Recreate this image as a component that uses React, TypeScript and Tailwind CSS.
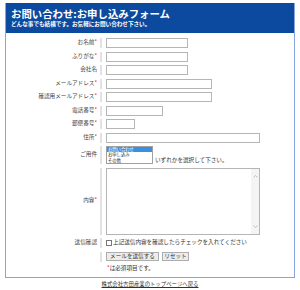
import React from "react";

const font = { fontFamily: '"Noto Sans CJK JP", "Noto Sans", sans-serif' };

type Row = { label: string; required?: boolean; width: number };

const rows: Row[] = [
  { label: "お名前", required: true, width: 82 },
  { label: "ふりがな", required: true, width: 82 },
  { label: "会社名", width: 82 },
  { label: "メールアドレス", required: true, width: 106 },
  { label: "確認用メールアドレス", required: true, width: 106 },
  { label: "電話番号", required: true, width: 57 },
  { label: "郵便番号", required: true, width: 29 },
  { label: "住所", required: true, width: 154 },
];

const options = ["お問い合わせ", "お申し込み", "その他"];

function Label({ text, required }: { text: string; required?: boolean }) {
  return (
    <div className="w-[94px] shrink-0 pr-[3px] text-right text-[5.6px] leading-none text-[#444]">
      {text}
      {required && <span className="text-[#e00]">*</span>}
    </div>
  );
}

function Cell({ children, className = "" }: { children: React.ReactNode; className?: string }) {
  return (
    <div className={"flex border-l-2 border-[#e2e2e2] pl-[4px] " + className}>{children}</div>
  );
}

export default function App() {
  return (
    <div className="h-[290px] w-[300px] bg-white px-[5px] pt-[3px]" style={font}>
      <div className="border-x border-b border-[#88a6dd] pb-[5px]">
        <div className="h-[30px] bg-[#0b4a9e] px-[5px] pt-[5px] text-white">
          <div className="text-[10.4px] font-bold leading-[12px]">
            お問い合わせ:お申し込みフォーム
          </div>
          <div className="mt-[1px] text-[5.6px] font-bold leading-[7px]">
            どんな事でも結構です。お気軽にお問い合わせ下さい。
          </div>
        </div>

        <div className="flex flex-col gap-[3.5px] pt-[5px]">
          {rows.map((r) => (
            <div key={r.label} className="flex items-center">
              <Label text={r.label} required={r.required} />
              <Cell>
                <div
                  className="h-[10px] border border-[#b5b5b5] bg-white"
                  style={{ width: r.width }}
                />
              </Cell>
            </div>
          ))}

          <div className="flex items-center">
            <Label text="ご用件" />
            <Cell className="items-end">
              <div className="flex h-[18px] w-[47px] flex-col border border-[#a0a0a0] text-[#222]">
                {options.map((o, i) => (
                  <div
                    key={o}
                    className={
                      "flex h-[5.33px] items-center overflow-hidden px-[1px] " +
                      (i === 0 ? "bg-[#3b8fe0] text-white" : "")
                    }
                  >
                    <span className="text-[4.3px] leading-[5.33px]">{o}</span>
                  </div>
                ))}
              </div>
              <span className="ml-[2px] text-[5.6px] leading-[7px] text-[#333]">
                いずれかを選択して下さい。
              </span>
            </Cell>
          </div>

          <div className="flex items-center">
            <Label text="内容" required />
            <Cell>
              <div className="flex h-[67px] w-[154px] justify-end border border-[#b5b5b5] bg-white">
                <div className="flex w-[8px] flex-col items-center justify-between bg-[#f4f4f4] py-[6px] text-[#aaa]">
                  <svg width="5" height="3" viewBox="0 0 5 3">
                    <path d="M0.5 2.5 L2.5 0.5 L4.5 2.5" fill="none" stroke="currentColor" strokeWidth="0.7" />
                  </svg>
                  <svg width="5" height="3" viewBox="0 0 5 3">
                    <path d="M0.5 0.5 L2.5 2.5 L4.5 0.5" fill="none" stroke="currentColor" strokeWidth="0.7" />
                  </svg>
                </div>
              </div>
            </Cell>
          </div>

          <div className="flex items-center">
            <Label text="送信確認" />
            <Cell className="h-[10px] items-center">
              <div className="h-[6px] w-[6px] border border-[#777] bg-white" />
              <span className="ml-[1px] text-[5.6px] leading-none text-[#333]">
                上記送信内容を確認したらチェックを入れてください
              </span>
            </Cell>
          </div>

          <div className="flex items-center">
            <div className="w-[94px] shrink-0" />
            <Cell className="h-[10px] items-center gap-[3px]">
              <div className="flex h-[9px] w-[53px] items-center justify-center border border-[#adadad] bg-[#ececec] text-[5.6px] leading-none text-[#333]">
                メールを送信する
              </div>
              <div className="flex h-[9px] w-[27px] items-center justify-center border border-[#adadad] bg-[#ececec] text-[5.6px] leading-none text-[#333]">
                リセット
              </div>
            </Cell>
          </div>

          <div className="flex items-center">
            <div className="w-[96px] shrink-0" />
            <span className="ml-[5px] text-[5.6px] leading-[7px] text-[#333]">
              <span className="text-[#e00]">*</span>は必須項目です。
            </span>
          </div>
        </div>
      </div>

      <div className="mt-[2px] text-center text-[5.4px] leading-[8px] text-[#333] underline">
        株式会社吉田産業のトップページへ戻る
      </div>
    </div>
  );
}
